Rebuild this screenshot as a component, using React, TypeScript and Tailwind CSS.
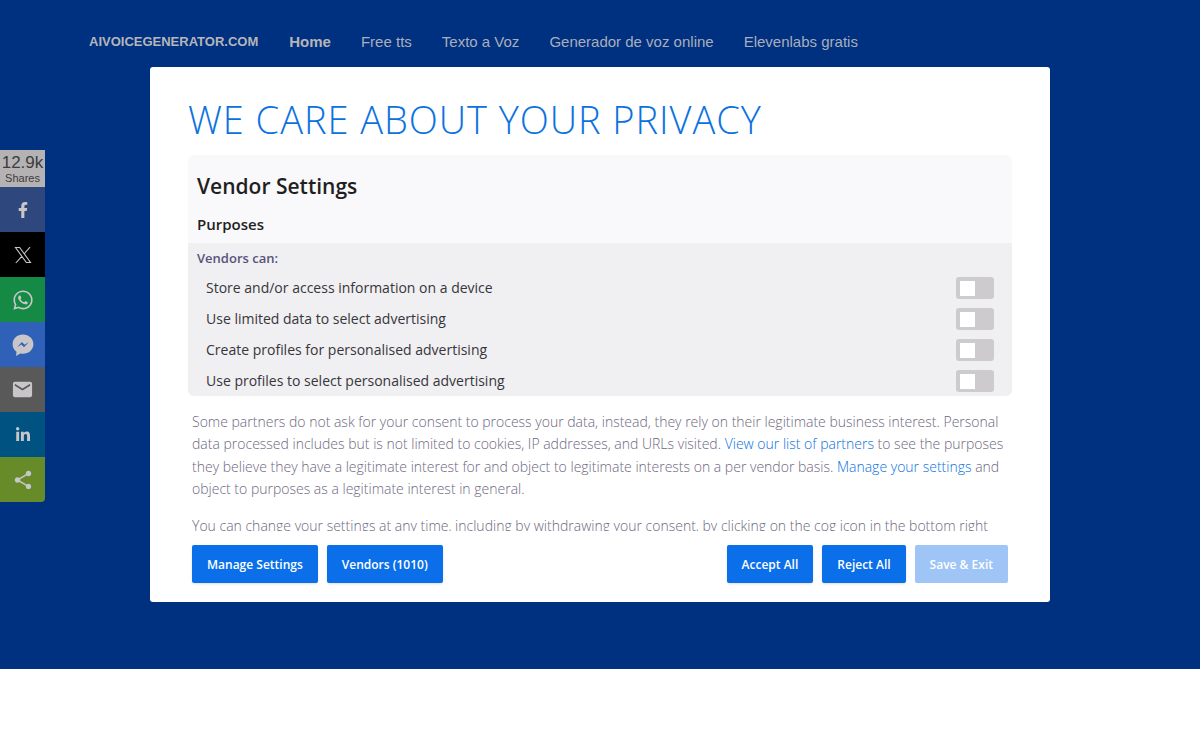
import React, {useState} from "react";
import {FaFacebookF, FaLinkedinIn, FaWhatsapp} from "react-icons/fa";
import {MdEmail, MdShare} from "react-icons/md";

const NAV_LINKS = ["Home", "Free tts", "Texto a Voz", "Generador de voz online", "Elevenlabs gratis"];

const PURPOSES = [
    "Store and/or access information on a device",
    "Use limited data to select advertising",
    "Create profiles for personalised advertising",
    "Use profiles to select personalised advertising",
];

const XIcon = () => (
    <svg width="18" height="18" viewBox="0 0 18 18" fill="none" stroke="currentColor" strokeWidth="1.1">
        <path d="M1.500 1.500h4.200l10.800 15h-4.200zM16 1.200L10 8M7.800 10.300L1.800 17" />
    </svg>
);

const MessengerIcon = () => (
    <svg width="22" height="22" viewBox="0 0 22 22" fill="currentColor">
        <path
            fillRule="evenodd"
            d="M11 .6C5.200.6.6 4.800.6 10.200c0 3.200 1.500 5.700 3.900 7.500l-.4 4.300 4.200-2.600c.9.2 1.800.3 2.700.3 5.800 0 10.400-4.200 10.400-9.500S16.800.6 11 .6zM12 13.300l-2.600-2.700-4.300 2.700 4.800-5.300 2.700 2.700 4.300-2.700z"
        />
    </svg>
);

const SHARE_BUTTONS = [
    {label: "Facebook", color: "bg-[#2e487d]", icon: <FaFacebookF size={16} />},
    {label: "X", color: "bg-black", icon: <XIcon />},
    {label: "WhatsApp", color: "bg-[#158a45]", icon: <FaWhatsapp size={22} />},
    {label: "Messenger", color: "bg-[#3061b9]", icon: <MessengerIcon />},
    {label: "Email", color: "bg-[#595959]", icon: <MdEmail size={23} />},
    {label: "LinkedIn", color: "bg-[#005380]", icon: <FaLinkedinIn size={16} />},
    {label: "ShareThis", color: "bg-[#688b29]", icon: <MdShare size={22} />},
];

const Header = () => (
    <header className="flex items-center gap-[31px] px-[89px] pt-[30px] text-[#a9aebb] font-['Liberation_Sans',Arial,sans-serif]">
        <a href="#" className="text-[13px] leading-6 font-bold text-[#b6b6b9]">AIVOICEGENERATOR.COM</a>
        <nav className="flex gap-[30px] text-[15px] leading-6">
            {NAV_LINKS.map((link, i) => (
                <a key={link} href="#" className={i === 0 ? "font-bold text-[#b6b6b9]" : ""}>{link}</a>
            ))}
        </nav>
    </header>
);

const ShareBar = () => (
    <aside className="absolute left-0 top-[150px] w-[45px] overflow-hidden rounded-br text-[#c8c6c8] font-['Liberation_Sans',Arial,sans-serif]">
        <div className="flex h-[37px] flex-col items-center justify-center bg-[#b5b2b4] pt-px text-[#3c3c3e]">
            <span className="text-[17px] leading-[18px]">12.9k</span>
            <span className="text-[11px] leading-3">Shares</span>
        </div>
        {SHARE_BUTTONS.map(({label, color, icon}) => (
            <button key={label} type="button" aria-label={label} className={`flex h-[45px] w-full items-center justify-center ${color}`}>
                {icon}
            </button>
        ))}
    </aside>
);

const ActionButton = ({children, disabled = false}: {children: React.ReactNode; disabled?: boolean}) => (
    <button
        type="button"
        disabled={disabled}
        className="rounded-xs bg-[#0a6fe8] px-[15px] pt-[10px] pb-2 text-xs leading-5 font-semibold text-white shadow-sm disabled:bg-[#9fc5f6] disabled:shadow-none"
    >
        {children}
    </button>
);

const PrivacyDialog = () => {
    const [checked, setChecked] = useState<string[]>([]);

    const toggle = (purpose: string) => {
        setChecked((prev) => prev.includes(purpose) ? prev.filter((p) => p !== purpose) : [...prev, purpose]);
    };

    return (
        <div
            role="dialog"
            aria-labelledby="privacy-title"
            className="flex h-4/5 w-3/4 flex-col rounded-[3px] bg-white px-[38px] pt-[26px] pb-[19px] text-[#6d6880] font-['Open_Sans',sans-serif]"
        >
            <h1 id="privacy-title" className="text-[38px] leading-[52px] font-light tracking-wide text-[#0a72e0] uppercase">
                We care about your privacy
            </h1>
            <div className="mt-[10px] min-h-0 flex-1 overflow-hidden">
                <section className="h-[241px] overflow-hidden rounded-md bg-[#f9f8fb]">
                    <div className="h-[88px] px-[9px] pt-4 text-[#1f1f21]">
                        <h2 className="text-[21px] leading-[30px] font-semibold">Vendor Settings</h2>
                        <h3 className="mt-[11px] text-[15px] leading-6 font-semibold">Purposes</h3>
                    </div>
                    <div className="h-full bg-[#f0eff2] pt-1 pr-[18px] pl-[9px]">
                        <p className="text-[13px] leading-[22px] font-semibold text-[#57527a]">Vendors can:</p>
                        <ul className="mt-1 pl-[9px] text-sm text-[#37363a]">
                            {PURPOSES.map((purpose) => (
                                <li key={purpose}>
                                    <label className="flex h-[31px] items-center justify-between">
                                        {purpose}
                                        <input
                                            type="checkbox"
                                            checked={checked.includes(purpose)}
                                            onChange={() => toggle(purpose)}
                                            className="flex h-[22px] w-[38px] appearance-none items-center rounded-[3px] bg-[#cdcbce] px-1 before:size-[15px] before:bg-white checked:justify-end checked:bg-[#0a6fe8]"
                                        />
                                    </label>
                                </li>
                            ))}
                        </ul>
                    </div>
                </section>
                <div className="px-1 pt-[15px] text-sm leading-[1.6] font-light">
                    <p>
                        Some partners do not ask for your consent to process your data, instead, they rely on their legitimate business
                        interest. Personal data processed includes but is not limited to cookies, IP addresses, and URLs visited.{" "}
                        <a href="#" className="text-[#0a72e0]">View our list of partners</a> to see the purposes they believe they have a
                        legitimate interest for and object to legitimate interests on a per vendor basis.{" "}
                        <a href="#" className="text-[#0a72e0]">Manage your settings</a> and object to purposes as a legitimate interest in general.
                    </p>
                    <p className="mt-[15px]">
                        You can change your settings at any time, including by withdrawing your consent, by clicking on the cog icon in
                        the bottom right hand corner of the page.
                    </p>
                </div>
            </div>
            <div className="mt-[14px] flex justify-between px-1">
                <div className="flex gap-[9px]">
                    <ActionButton>Manage Settings</ActionButton>
                    <ActionButton>Vendors (1010)</ActionButton>
                </div>
                <div className="flex gap-[9px]">
                    <ActionButton>Accept All</ActionButton>
                    <ActionButton>Reject All</ActionButton>
                    <ActionButton disabled>Save &amp; Exit</ActionButton>
                </div>
            </div>
        </div>
    );
};

const App = () => {
    return (
        <div className="bg-white">
            <main className="relative h-[669px] bg-[#003080]">
                <Header />
                <ShareBar />
                <div className="absolute inset-0 flex items-center justify-center">
                    <PrivacyDialog />
                </div>
            </main>
        </div>
    );
};

export default App;
